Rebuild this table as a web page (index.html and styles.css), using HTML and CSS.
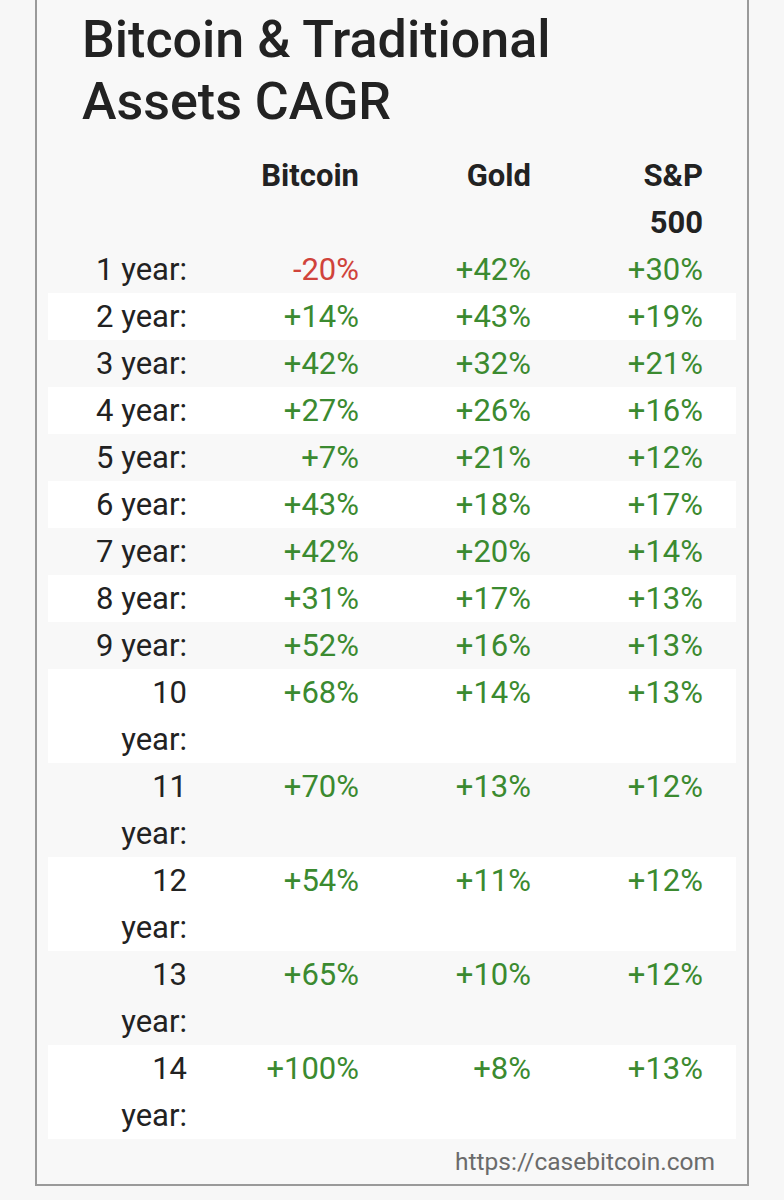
FILE: index.html
```html
<!DOCTYPE html>
<html lang="en">
<head>
  <meta charset="UTF-8">
  <title>Bitcoin &amp; Traditional Assets CAGR</title>
  <link rel="stylesheet" href="styles.css">
</head>
<body>

  <div class="card">
    <h1>Bitcoin &amp; Traditional Assets CAGR</h1>

    <table class="cagr">
      <thead>
        <tr>
          <th></th>
          <th>Bitcoin</th>
          <th>Gold</th>
          <th>S&amp;P 500</th>
        </tr>
      </thead>
      <tbody>
        <tr><td>1 year:</td><td class="neg">-20%</td><td class="pos">+42%</td><td class="pos">+30%</td></tr>
        <tr><td>2 year:</td><td class="pos">+14%</td><td class="pos">+43%</td><td class="pos">+19%</td></tr>
        <tr><td>3 year:</td><td class="pos">+42%</td><td class="pos">+32%</td><td class="pos">+21%</td></tr>
        <tr><td>4 year:</td><td class="pos">+27%</td><td class="pos">+26%</td><td class="pos">+16%</td></tr>
        <tr><td>5 year:</td><td class="pos">+7%</td><td class="pos">+21%</td><td class="pos">+12%</td></tr>
        <tr><td>6 year:</td><td class="pos">+43%</td><td class="pos">+18%</td><td class="pos">+17%</td></tr>
        <tr><td>7 year:</td><td class="pos">+42%</td><td class="pos">+20%</td><td class="pos">+14%</td></tr>
        <tr><td>8 year:</td><td class="pos">+31%</td><td class="pos">+17%</td><td class="pos">+13%</td></tr>
        <tr><td>9 year:</td><td class="pos">+52%</td><td class="pos">+16%</td><td class="pos">+13%</td></tr>
        <tr><td>10 year:</td><td class="pos">+68%</td><td class="pos">+14%</td><td class="pos">+13%</td></tr>
        <tr><td>11 year:</td><td class="pos">+70%</td><td class="pos">+13%</td><td class="pos">+12%</td></tr>
        <tr><td>12 year:</td><td class="pos">+54%</td><td class="pos">+11%</td><td class="pos">+12%</td></tr>
        <tr><td>13 year:</td><td class="pos">+65%</td><td class="pos">+10%</td><td class="pos">+12%</td></tr>
        <tr><td>14 year:</td><td class="pos">+100%</td><td class="pos">+8%</td><td class="pos">+13%</td></tr>
      </tbody>
    </table>

    <div class="source">https://casebitcoin.com</div>
  </div>

</body>
</html>
```

FILE: styles.css
```css
body {
  margin: 0;
  font-family: Roboto, "Noto Sans", Arial, sans-serif;
  background: #f7f7f7;
  color: #222;
}

.card {
  width: 688px;
  margin-left: 35px;
  padding: 9px 11px 0 11px;
  border: 2px solid #9a9a9a;
  border-top: none;
  background: #f8f8f8;
}

h1 {
  max-width: 560px;
  margin: 0 0 19px 34px;
  font-size: 52px;
  font-weight: 500;
  line-height: 62px;
}

.cagr {
  width: 100%;
  table-layout: fixed;
  border-collapse: collapse;
  font-size: 31px;
  line-height: 47px;
}

.cagr th,
.cagr td {
  padding: 0 33px 0 39px;
  text-align: right;
  vertical-align: top;
}

.cagr th {
  font-weight: bold;
}

.cagr tbody tr:nth-child(even) {
  background: #fff;
}

.pos {
  color: #3b8a30;
}

.neg {
  color: #d0433b;
}

.source {
  padding: 6px 21px 5px 0;
  text-align: right;
  font-size: 24.5px;
  line-height: 34px;
  color: #6b6b6b;
}
```
